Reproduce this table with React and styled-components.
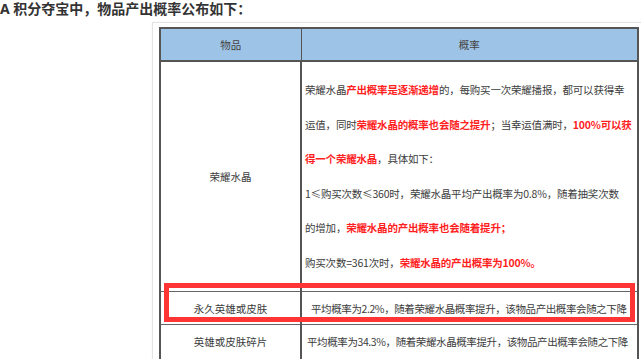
import React from "react";
import styled, { createGlobalStyle } from "styled-components";

const Global = createGlobalStyle`
  html, body { margin: 0; padding: 0; background: #fff; overflow: hidden; }
  body { font-family: "Noto Sans", "Noto Sans CJK SC", sans-serif; color: #3a3a3a; }
`;

const Page = styled.div`
  width: 641px;
  height: 359px;
  overflow: hidden;
`;

const Title = styled.h3`
  margin: 0;
  font-size: 14px;
  line-height: 18px;
  font-weight: 700;
  color: #333;
  white-space: nowrap;
`;

const Frame = styled.div`
  margin: 4px 0 0 152px;
  width: 490px;
  border: 1px solid #e3e3e3;
  padding: 4px 6px 6px 6px;
  box-shadow: 0 0 2px rgba(0, 0, 0, 0.06);
`;

const TableWrap = styled.div`
  position: relative;
  width: 478px;
`;

const Table = styled.table`
  border-collapse: collapse;
  table-layout: fixed;
  width: 478px;
  border: 2px solid #555;
  font-family: "Noto Sans CJK SC", "Noto Sans", sans-serif;
  font-size: 10.5px;
  color: #3c3c3c;
`;

const HeadCell = styled.th`
  background: #9dc3e6;
  font-weight: 400;
  height: 31px;
  padding: 0;
  border: 1px solid #555;
  border-bottom: 2px solid #555;
  text-align: center;
  color: #444;
`;

const Row = styled.tr`
  height: ${(p) => p.$h}px;
`;

const NameCell = styled.td`
  border: 1px solid #666;
  border-right: 2px solid #555;
  text-align: center;
  vertical-align: middle;
  padding: 0;
`;

const DescCell = styled.td`
  border: 1px solid #666;
  padding: ${(p) => (p.$tall ? "11px 0 11px 3px" : `0 0 0 ${p.$indent || 5}px`)};
  line-height: ${(p) => (p.$tall ? "34.5px" : "normal")};
  letter-spacing: ${(p) => (p.$tall ? "-0.2px" : "-0.4px")};
  white-space: nowrap;
  overflow: hidden;
  vertical-align: middle;
`;

const Em = styled.span`
  color: #ff1f1f;
  font-weight: 700;
`;

const Highlight = styled.div`
  position: absolute;
  left: 5px;
  top: 256px;
  width: 461px;
  height: 29px;
  border: 5px solid #ff3434;
  pointer-events: none;
`;

export default function App() {
  return (
    <Page>
      <Global />
      <Title>A 积分夺宝中，物品产出概率公布如下：</Title>
      <Frame>
        <TableWrap>
          <Table>
            <colgroup>
              <col style={{ width: 141 }} />
              <col style={{ width: 337 }} />
            </colgroup>
            <thead>
              <tr>
                <HeadCell>物品</HeadCell>
                <HeadCell>概率</HeadCell>
              </tr>
            </thead>
            <tbody>
              <Row $h={229}>
                <NameCell>荣耀水晶</NameCell>
                <DescCell $tall>
                  荣耀水晶<Em>产出概率是逐渐递增</Em>的，每购买一次荣耀播报，都可以获得幸
                  <br />
                  运值，同时<Em>荣耀水晶的概率也会随之提升</Em>；当幸运值满时，<Em>100%可以获</Em>
                  <br />
                  <Em>得一个荣耀水晶</Em>，具体如下：
                  <br />
                  1≤购买次数≤360时，荣耀水晶平均产出概率为0.8%，随着抽奖次数
                  <br />
                  的增加，<Em>荣耀水晶的产出概率也会随着提升；</Em>
                  <br />
                  购买次数=361次时，<Em>荣耀水晶的产出概率为100%。</Em>
                </DescCell>
              </Row>
              <Row $h={33}>
                <NameCell>永久英雄或皮肤</NameCell>
                <DescCell $indent={9}>平均概率为2.2%，随着荣耀水晶概率提升，该物品产出概率会随之下降</DescCell>
              </Row>
              <Row $h={35}>
                <NameCell>英雄或皮肤碎片</NameCell>
                <DescCell $indent={5}>平均概率为34.3%，随着荣耀水晶概率提升，该物品产出概率会随之下降</DescCell>
              </Row>
            </tbody>
          </Table>
          <Highlight />
        </TableWrap>
      </Frame>
    </Page>
  );
}
